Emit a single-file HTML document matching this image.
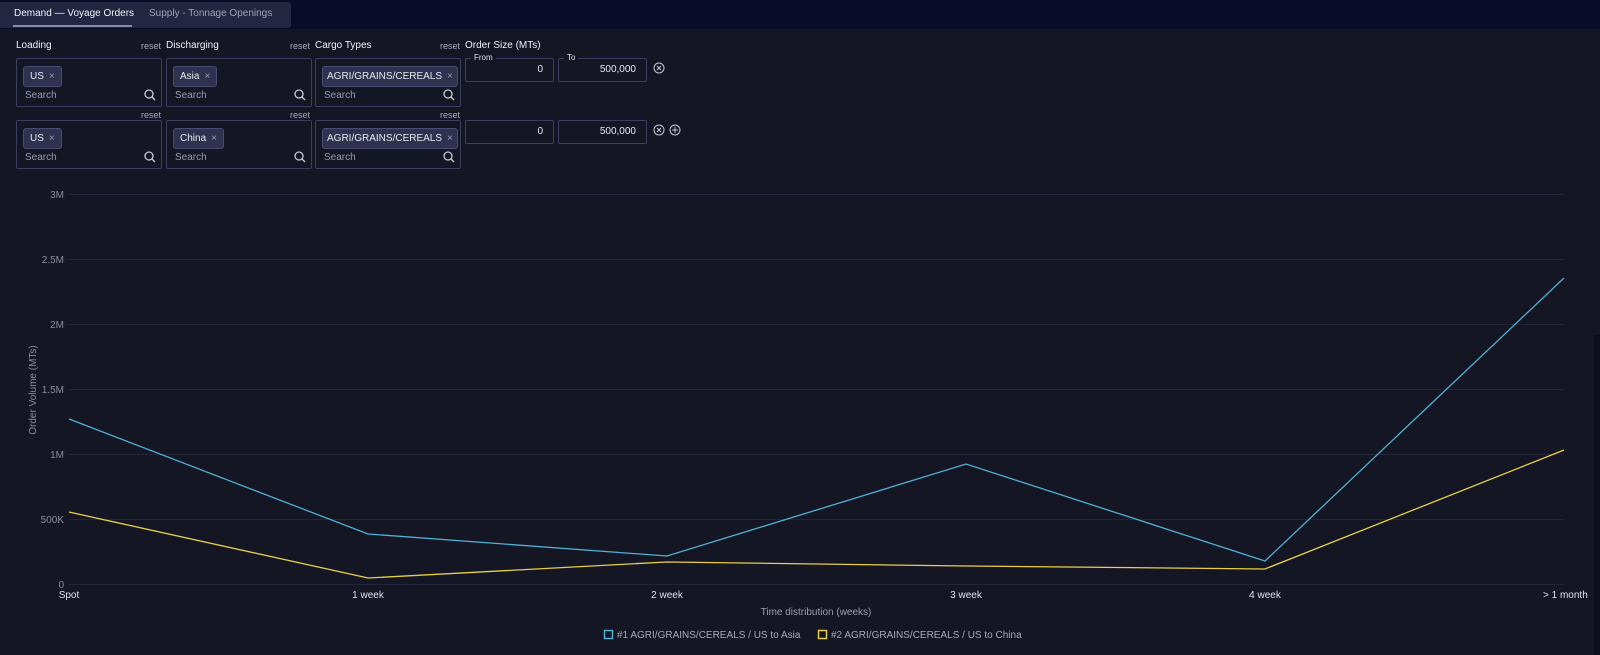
<!DOCTYPE html>
<html><head><style>
*{margin:0;padding:0;box-sizing:border-box}
body{width:1600px;height:655px;background:#151624;font-family:"Liberation Sans",sans-serif;color:#e6e6ee;position:relative;overflow:hidden;font-size:10px}
.a{position:absolute}
.top{left:0;top:0;width:1600px;height:29px;background:#0b0b2a}
.tabs{left:0;top:2px;width:291px;height:26px;background:#242540;border-radius:0 3px 3px 0}
.lbl{font-size:10px;color:#f0f0f5}
.rs{font-size:9px;color:#a8a8b8}
.box{border:1px solid #3c3d62;border-radius:2px;width:146px;height:49px}
.chip{position:absolute;left:6px;top:7px;height:21px;background:#30314f;border:1px solid #4a4b72;border-radius:3px;padding:0 6px;line-height:19px;font-size:10px;color:#e8e8f0;white-space:nowrap}
.chip span{color:#9a9ab0;margin-left:5px}
.srch{position:absolute;left:8px;top:31px;font-size:10px;color:#9a9ab0}
.mg{position:absolute;right:5px;top:30px}
.num{border:1px solid #3c3d62;border-radius:2px;height:24px;width:89px;text-align:right;padding-right:10px;line-height:22px;font-size:10px}
</style></head><body>
<div class="a top"></div>
<div class="a tabs"></div>
<div class="a" style="left:14px;top:8px;font-size:10px;color:#f0f0f5">Demand — Voyage Orders</div>
<div class="a" style="left:13px;top:25px;width:119px;height:2px;background:#8a8aa8"></div>
<div class="a" style="left:149px;top:8px;font-size:10px;color:#a0a0b8">Supply - Tonnage Openings</div>

<div class="a lbl" style="left:16px;top:40px">Loading</div>
<div class="a rs" style="left:141px;top:41px">reset</div>
<div class="a lbl" style="left:166px;top:40px">Discharging</div>
<div class="a rs" style="left:290px;top:41px">reset</div>
<div class="a lbl" style="left:315px;top:40px">Cargo Types</div>
<div class="a rs" style="left:440px;top:41px">reset</div>
<div class="a lbl" style="left:465px;top:40px">Order Size (MTs)</div>

<div class="a rs" style="left:141px;top:110px">reset</div>
<div class="a rs" style="left:290px;top:110px">reset</div>
<div class="a rs" style="left:440px;top:110px">reset</div>

<svg width="0" height="0" style="position:absolute"><defs><g id="mg"><circle cx="5" cy="5" r="4" fill="none" stroke="#c8c8d6" stroke-width="1.3"/><path d="M8 8l3 3" stroke="#c8c8d6" stroke-width="1.4"/></g></defs></svg>

<div class="a box" style="left:16px;top:58px"><div class="chip">US<span>×</span></div><div class="srch">Search</div><svg class="mg" width="12" height="12"><use href="#mg"/></svg></div>
<div class="a box" style="left:166px;top:58px"><div class="chip">Asia<span>×</span></div><div class="srch">Search</div><svg class="mg" width="12" height="12"><use href="#mg"/></svg></div>
<div class="a box" style="left:315px;top:58px"><div class="chip" style="left:6px;padding:0 4px">AGRI/GRAINS/CEREALS<span>×</span></div><div class="srch">Search</div><svg class="mg" width="12" height="12"><use href="#mg"/></svg></div>

<div class="a box" style="left:16px;top:120px"><div class="chip">US<span>×</span></div><div class="srch">Search</div><svg class="mg" width="12" height="12"><use href="#mg"/></svg></div>
<div class="a box" style="left:166px;top:120px"><div class="chip">China<span>×</span></div><div class="srch">Search</div><svg class="mg" width="12" height="12"><use href="#mg"/></svg></div>
<div class="a box" style="left:315px;top:120px"><div class="chip" style="padding:0 4px">AGRI/GRAINS/CEREALS<span>×</span></div><div class="srch">Search</div><svg class="mg" width="12" height="12"><use href="#mg"/></svg></div>

<div class="a num" style="left:465px;top:58px">0</div>
<div class="a" style="left:471px;top:53px;font-size:8px;background:#151624;padding:0 3px;color:#e0e0ea">From</div>
<div class="a num" style="left:558px;top:58px">500,000</div>
<div class="a" style="left:564px;top:53px;font-size:8px;background:#151624;padding:0 3px;color:#e0e0ea">To</div>
<div class="a num" style="left:465px;top:120px">0</div>
<div class="a num" style="left:558px;top:120px">500,000</div>

<svg class="a" style="left:650px;top:60px" width="40" height="80">
<g fill="none" stroke="#c8c8d6" stroke-width="1"><circle cx="9" cy="8" r="5"/><path d="M7 6l4 4M11 6l-4 4"/>
<circle cx="9" cy="70" r="5"/><path d="M7 68l4 4M11 68l-4 4"/>
<circle cx="25" cy="70" r="5"/><path d="M25 67v6M22 70h6"/></g></svg>

<svg class="a" style="left:0;top:0" width="1600" height="655">
<g stroke="#22243a" stroke-width="1">
<line x1="69" x2="1564" y1="194.5" y2="194.5"/><line x1="69" x2="1564" y1="259.5" y2="259.5"/><line x1="69" x2="1564" y1="324.5" y2="324.5"/><line x1="69" x2="1564" y1="389.5" y2="389.5"/><line x1="69" x2="1564" y1="454.5" y2="454.5"/><line x1="69" x2="1564" y1="519.5" y2="519.5"/><line x1="69" x2="1564" y1="584.5" y2="584.5"/></g>
<g font-family="Liberation Sans" font-size="10" fill="#8c8ca0" text-anchor="end">
<text x="64" y="198">3M</text><text x="64" y="263">2.5M</text><text x="64" y="328">2M</text><text x="64" y="393">1.5M</text><text x="64" y="458">1M</text><text x="64" y="523">500K</text><text x="64" y="588">0</text></g>
<text transform="translate(36,390) rotate(-90)" font-family="Liberation Sans" font-size="10" fill="#8c8ca0" text-anchor="middle">Order Volume (MTs)</text>
<g font-family="Liberation Sans" font-size="10" fill="#e0e0ea" text-anchor="middle">
<text x="69" y="598">Spot</text><text x="368" y="598">1 week</text><text x="667" y="598">2 week</text><text x="966" y="598">3 week</text><text x="1265" y="598">4 week</text><text x="1543" y="598" text-anchor="start">&gt; 1 month</text></g>
<text x="816" y="615" font-family="Liberation Sans" font-size="10" fill="#9c9cb0" text-anchor="middle">Time distribution (weeks)</text>
<polyline fill="none" stroke="#4fb0d6" stroke-width="1.3" points="69,419 368,534 667,556 966,464 1265,561 1564,278"/>
<polyline fill="none" stroke="#e8cf4a" stroke-width="1.3" points="69,512 368,578 667,562 966,566 1265,569 1564,450"/>
<rect x="1594" y="335" width="6" height="320" fill="#0e0f1a"/>
<rect x="604.5" y="630.5" width="8" height="8" fill="none" stroke="#4fb0d6" stroke-width="1.5"/>
<text x="617" y="638" font-family="Liberation Sans" font-size="10" fill="#a8a8b8">#1 AGRI/GRAINS/CEREALS / US to Asia</text>
<rect x="818.5" y="630.5" width="8" height="8" fill="none" stroke="#e8cf4a" stroke-width="1.5"/>
<text x="831" y="638" font-family="Liberation Sans" font-size="10" fill="#a8a8b8">#2 AGRI/GRAINS/CEREALS / US to China</text>
</svg>
</body></html>
